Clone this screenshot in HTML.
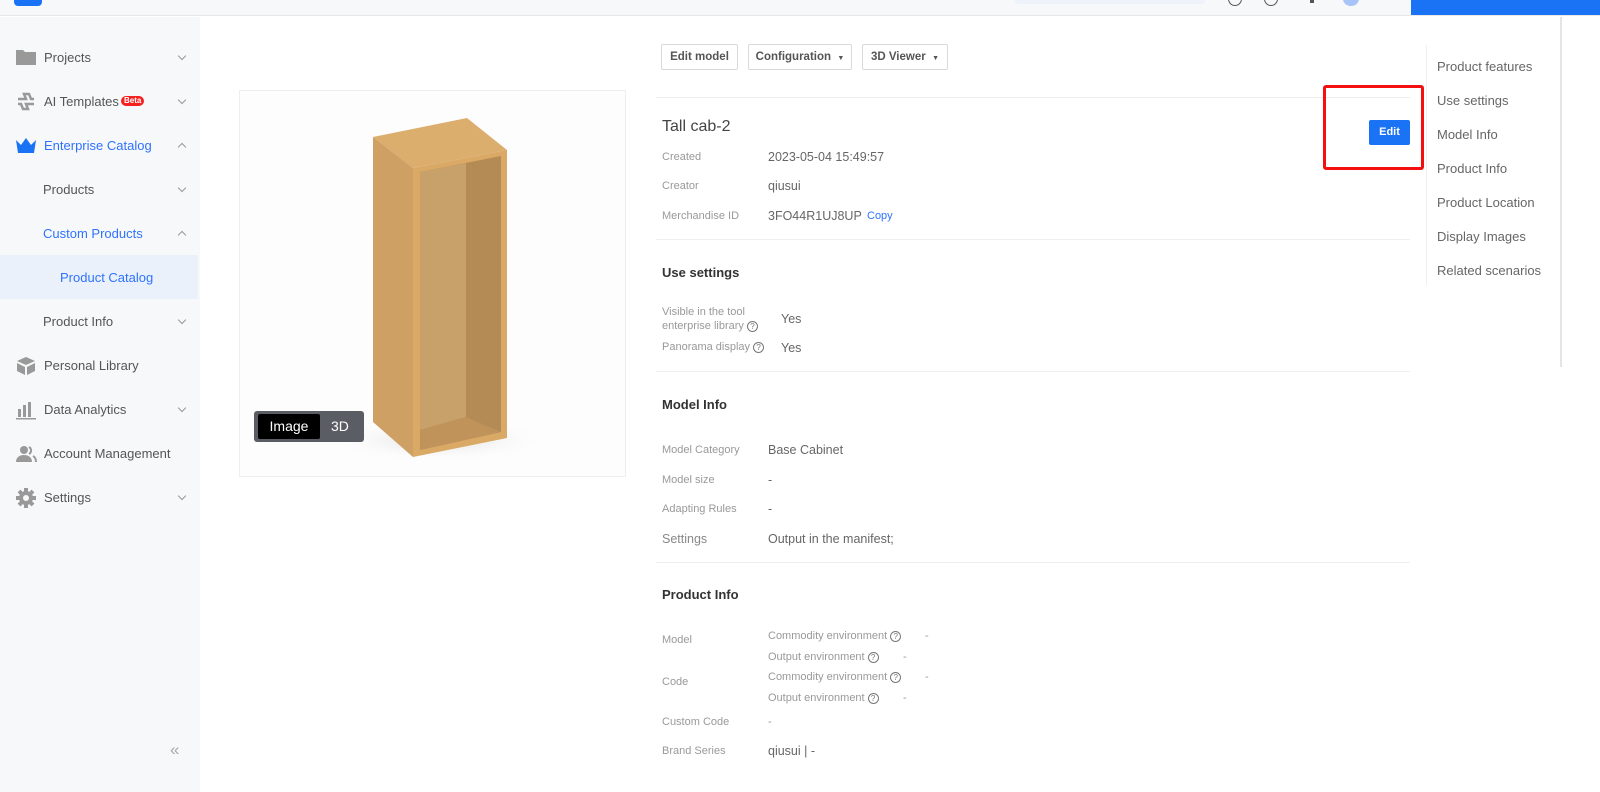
<!DOCTYPE html>
<html><head><meta charset="utf-8"><style>
*{margin:0;padding:0;box-sizing:border-box}
body{width:1600px;height:792px;overflow:hidden;background:#fff;font-family:"Liberation Sans",sans-serif;position:relative;color:#333}
.a{position:absolute;white-space:nowrap}
.top{left:0;top:0;width:1600px;height:16px;background:#f7f8fa;border-bottom:1px solid #e8e8e8}
.side{left:0;top:17px;width:200px;height:775px;background:#f7f8f9}
.nav{font-size:13px;color:#555}
.blue{color:#2f72ff}
.chev{width:6px;height:6px;border-right:1.5px solid #999;border-bottom:1.5px solid #999;transform:rotate(45deg)}
.up{transform:rotate(-135deg)}
.lbl{font-size:11px;color:#999}
.val{font-size:12.5px;color:#666}
.h{font-size:13px;font-weight:bold;color:#333}
.hr{height:1px;background:#eee;left:656px;width:754px}
.btn{border:1px solid #d9d9d9;border-radius:2px;font-size:11.5px;font-weight:bold;color:#555;height:26px;line-height:24px;text-align:center;background:#fff}
.q{display:inline-block;width:11px;height:11px;border:1px solid #777;border-radius:50%;font-size:8px;line-height:9px;text-align:center;color:#777;vertical-align:middle;margin-left:3px}
.rn{font-size:13px;color:#666;left:1437px}
</style></head><body>
<div class="a top"></div>
<div class="a" style="left:14px;top:0;width:28px;height:6px;background:#1a73f5;border-radius:0 0 4px 4px"></div>
<div class="a" style="left:1015px;top:0;width:190px;height:4px;background:#eef3fb;border-radius:0 0 3px 3px"></div>
<div class="a" style="left:1228px;top:-8px;width:14px;height:14px;border:1.5px solid #555;border-radius:50%"></div>
<div class="a" style="left:1264px;top:-8px;width:14px;height:14px;border:1.5px solid #555;border-radius:50%"></div>
<div class="a" style="left:1310px;top:0;width:4px;height:3px;background:#555"></div>
<div class="a" style="left:1343px;top:-8px;width:16px;height:14px;background:#a8c3f8;border-radius:50%"></div>
<div class="a" style="left:1411px;top:0;width:189px;height:15px;background:#1a73f5"></div>
<div class="a" style="left:1560px;top:17px;width:2px;height:350px;background:#e5e5e5"></div>

<div class="a side"></div>
<div class="a" style="left:0;top:255px;width:198px;height:44px;background:#eaf1fb"></div>
<svg class="a" style="left:15px;top:47px" width="22" height="20"><path d="M1 3h7l2 2h11v13H1z" fill="#999"/></svg>
<svg class="a" style="left:16px;top:92px" width="20" height="20"><path d="M2 7h8l-2-5h5l2 5h3M18 12h-8l2 5H7l-2-5H2" stroke="#999" stroke-width="2.5" fill="none"/></svg>
<svg class="a" style="left:15px;top:137px" width="22" height="18"><path d="M1 3l5 5 5-7 5 7 5-5-2 13H3z" fill="#1a73f5"/></svg>
<svg class="a" style="left:16px;top:356px" width="20" height="20"><path d="M10 1l9 4-9 4-9-4zM1 7l8 4v8l-8-4zM19 7l-8 4v8l8-4z" fill="#999"/></svg>
<svg class="a" style="left:15px;top:400px" width="22" height="20"><path d="M3 9h3v8H3zM8 5h3v12H8zM13 2h3v15h-3zM1 18h20v1.5H1z" fill="#999"/></svg>
<svg class="a" style="left:15px;top:444px" width="22" height="20"><circle cx="9" cy="6" r="4" fill="#999"/><path d="M1 18c0-5 4-7 8-7s8 2 8 7z" fill="#999"/><path d="M14 3a4 4 0 010 7M18 12c2 1 3 3 3 6" stroke="#999" stroke-width="2" fill="none"/></svg>
<svg class="a" style="left:16px;top:488px" width="20" height="20"><circle cx="10" cy="10" r="7" fill="#999"/><path d="M10 0v20M0 10h20M3 3l14 14M17 3L3 17" stroke="#999" stroke-width="4"/><circle cx="10" cy="10" r="3" fill="#f7f8f9"/></svg>
<div class="a nav" style="left:44px;top:50px">Projects</div>
<div class="a nav" style="left:44px;top:94px">AI Templates</div>
<div class="a" style="left:121px;top:96px;background:#f52020;color:#fff;font-size:8px;font-weight:bold;border-radius:6px;padding:0 3px;line-height:10px">Beta</div>
<div class="a nav blue" style="left:44px;top:138px">Enterprise Catalog</div>
<div class="a nav" style="left:43px;top:182px">Products</div>
<div class="a nav blue" style="left:43px;top:226px">Custom Products</div>
<div class="a nav blue" style="left:60px;top:270px">Product Catalog</div>
<div class="a nav" style="left:43px;top:314px">Product Info</div>
<div class="a nav" style="left:44px;top:358px">Personal Library</div>
<div class="a nav" style="left:44px;top:402px">Data Analytics</div>
<div class="a nav" style="left:44px;top:446px">Account Management</div>
<div class="a nav" style="left:44px;top:490px">Settings</div>
<div class="a chev" style="left:179px;top:53px"></div>
<div class="a chev" style="left:179px;top:97px"></div>
<div class="a chev up" style="left:179px;top:144px"></div>
<div class="a chev" style="left:179px;top:185px"></div>
<div class="a chev up" style="left:179px;top:232px"></div>
<div class="a chev" style="left:179px;top:317px"></div>
<div class="a chev" style="left:179px;top:405px"></div>
<div class="a chev" style="left:179px;top:493px"></div>
<div class="a" style="left:170px;top:740px;font-size:17px;color:#aaa">«</div>

<div class="a" style="left:239px;top:90px;width:387px;height:387px;border:1px solid #eee;background:#fdfdfd"></div>
<svg class="a" style="left:239px;top:90px" width="387" height="387">
<defs><radialGradient id="sh" cx="0.5" cy="0.5" r="0.5"><stop offset="0" stop-color="#ddd"/><stop offset="1" stop-color="#fdfdfd" stop-opacity="0"/></radialGradient></defs>
<ellipse cx="200" cy="350" rx="110" ry="22" fill="url(#sh)"/>
<polygon points="134,47 228,28 268,60 174,78" fill="#dcae6e"/>
<polygon points="134,47 174,78 174,367 134,332" fill="#cfa064"/>
<polygon points="174,78 268,60 268,348 174,367" fill="#d9a965"/>
<polygon points="181,82 262,66 262,342 181,360" fill="#b48a55"/>
<polygon points="181,82 227,73 227,327 181,340" fill="#c8a069"/>
<polygon points="181,340 227,327 262,342 181,360" fill="#bf935a"/>
</svg>
<div class="a" style="left:254px;top:411px;width:110px;height:31px;background:#5a5d63;border-radius:3px"></div>
<div class="a" style="left:258px;top:414px;width:62px;height:25px;background:#000;border-radius:2px;color:#fff;font-size:14px;line-height:25px;text-align:center">Image</div>
<div class="a" style="left:331px;top:418px;color:#fff;font-size:14px">3D</div>

<div class="a btn" style="left:661px;top:44px;width:77px">Edit model</div>
<div class="a btn" style="left:748px;top:44px;width:104px">Configuration &nbsp;<span style="font-size:7px">▼</span></div>
<div class="a btn" style="left:862px;top:44px;width:86px">3D Viewer &nbsp;<span style="font-size:7px">▼</span></div>
<div class="a hr" style="top:97px"></div>

<div class="a" style="left:662px;top:118px;font-size:16px;color:#444">Tall cab-2</div>
<div class="a" style="left:1369px;top:120px;width:41px;height:25px;background:#1a73f5;border-radius:2px;color:#fff;font-size:11px;font-weight:bold;line-height:25px;text-align:center">Edit</div>
<div class="a" style="left:1323px;top:85px;width:101px;height:85px;border:3px solid #f41010;border-radius:3px"></div>

<div class="a lbl" style="left:662px;top:151px">Created</div><div class="a val" style="left:768px;top:150px">2023-05-04 15:49:57</div>
<div class="a lbl" style="left:662px;top:180px">Creator</div><div class="a val" style="left:768px;top:179px">qiusui</div>
<div class="a lbl" style="left:662px;top:210px">Merchandise ID</div><div class="a val" style="left:768px;top:209px">3FO44R1UJ8UP</div>
<div class="a" style="left:867px;top:210px;font-size:11px;color:#2f72ff">Copy</div>
<div class="a hr" style="top:239px"></div>

<div class="a h" style="left:662px;top:265px">Use settings</div>
<div class="a lbl" style="left:662px;top:305px;line-height:14px">Visible in the tool<br>enterprise library<span class="q">?</span></div>
<div class="a val" style="left:781px;top:312px">Yes</div>
<div class="a lbl" style="left:662px;top:341px">Panorama display<span class="q">?</span></div>
<div class="a val" style="left:781px;top:341px">Yes</div>
<div class="a hr" style="top:371px"></div>

<div class="a h" style="left:662px;top:397px">Model Info</div>
<div class="a lbl" style="left:662px;top:444px">Model Category</div><div class="a val" style="left:768px;top:443px">Base Cabinet</div>
<div class="a lbl" style="left:662px;top:474px">Model size</div><div class="a val" style="left:768px;top:473px">-</div>
<div class="a lbl" style="left:662px;top:503px">Adapting Rules</div><div class="a val" style="left:768px;top:502px">-</div>
<div class="a" style="left:662px;top:532px;font-size:12.5px;color:#888">Settings</div><div class="a val" style="left:768px;top:532px">Output in the manifest;</div>
<div class="a hr" style="top:562px"></div>

<div class="a h" style="left:662px;top:587px">Product Info</div>
<div class="a lbl" style="left:662px;top:634px">Model</div>
<div class="a lbl" style="left:768px;top:630px">Commodity environment<span class="q">?</span></div><div class="a lbl" style="left:925px;top:630px">-</div>
<div class="a lbl" style="left:768px;top:651px">Output environment<span class="q">?</span></div><div class="a lbl" style="left:903px;top:651px">-</div>
<div class="a lbl" style="left:662px;top:676px">Code</div>
<div class="a lbl" style="left:768px;top:671px">Commodity environment<span class="q">?</span></div><div class="a lbl" style="left:925px;top:671px">-</div>
<div class="a lbl" style="left:768px;top:692px">Output environment<span class="q">?</span></div><div class="a lbl" style="left:903px;top:692px">-</div>
<div class="a lbl" style="left:662px;top:716px">Custom Code</div><div class="a lbl" style="left:768px;top:716px">-</div>
<div class="a lbl" style="left:662px;top:745px">Brand Series</div><div class="a val" style="left:768px;top:744px">qiusui | -</div>

<div class="a" style="left:1426px;top:45px;width:1px;height:240px;background:#eee"></div>
<div class="a rn" style="top:59px">Product features</div>
<div class="a rn" style="top:93px">Use settings</div>
<div class="a rn" style="top:127px">Model Info</div>
<div class="a rn" style="top:161px">Product Info</div>
<div class="a rn" style="top:195px">Product Location</div>
<div class="a rn" style="top:229px">Display Images</div>
<div class="a rn" style="top:263px">Related scenarios</div>
</body></html>
